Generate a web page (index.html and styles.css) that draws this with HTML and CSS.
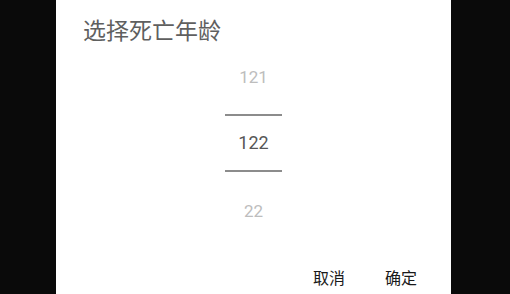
FILE: index.html
```html
<!DOCTYPE html>
<html lang="zh-CN">
<head>
<meta charset="utf-8">
<link rel="stylesheet" href="styles.css">
</head>
<body>
<div class="dialog">
  <div class="title">选择死亡年龄</div>
  <div class="picker">
    <div class="item item-prev">121</div>
    <div class="divider"></div>
    <div class="item item-current">122</div>
    <div class="divider"></div>
    <div class="item item-next">22</div>
  </div>
  <div class="actions">
    <div class="btn">取消</div>
    <div class="btn">确定</div>
  </div>
</div>
</body>
</html>
```
FILE: styles.css
```css
html, body {
  margin: 0;
  padding: 0;
  background: #0a0a0a;
  height: 294px;
  overflow: hidden;
}
body {
  font-family: Roboto, "Noto Sans CJK SC", sans-serif;
}
.dialog {
  margin-left: 56px;
  width: 395px;
  height: 294px;
  background: #ffffff;
  display: flex;
  flex-direction: column;
}
.title {
  padding: 14px 0 0 27px;
  font-family: "Noto Sans CJK SC", sans-serif;
  font-size: 23px;
  line-height: 30px;
  height: 29px;
  color: #5f5f5f;
}
.picker {
  width: 57px;
  align-self: center;
  display: flex;
  flex-direction: column;
  font-family: Roboto, sans-serif;
  text-align: center;
}
.item {
  color: #bdbdbd;
  font-size: 17px;
}
.item-prev {
  height: 68px;
  line-height: 68px;
  margin-bottom: 3px;
}
.item-current {
  height: 54px;
  line-height: 54px;
  font-size: 18px;
  color: #575757;
}
.item-next {
  height: 78px;
  line-height: 78px;
}
.divider {
  height: 2px;
  background: #8c8c8c;
}
.actions {
  display: flex;
  justify-content: flex-end;
  gap: 40px;
  padding: 17px 34px 0 0;
}
.btn {
  font-family: "Noto Sans CJK SC", sans-serif;
  font-size: 16px;
  line-height: 20px;
  font-weight: 400;
  color: #1a1a1a;
}
```
